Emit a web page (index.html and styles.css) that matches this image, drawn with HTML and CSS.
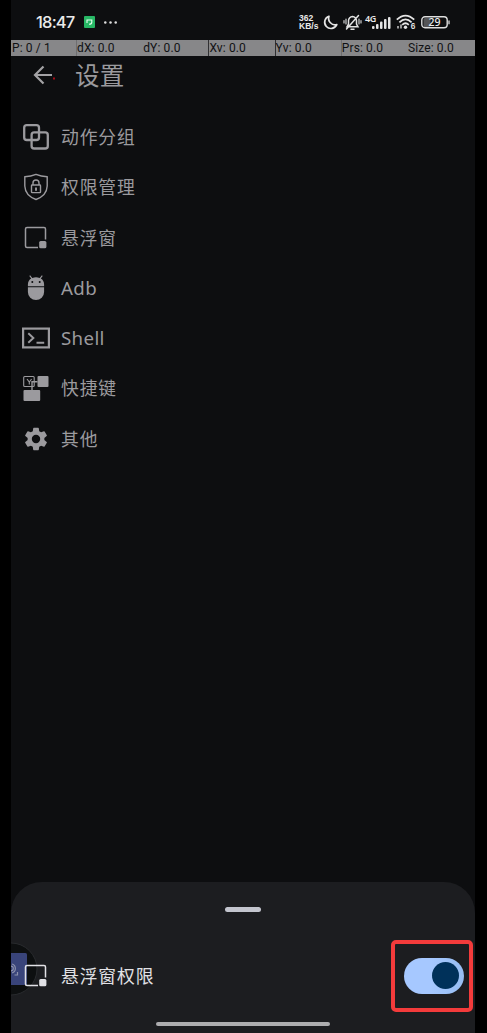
FILE: index.html
```html
<!DOCTYPE html>
<html lang="zh-CN">
<head>
<meta charset="utf-8">
<title>设置</title>
<link rel="stylesheet" href="styles.css">
</head>
<body>
<div class="phone">
  <header class="status">
    <span class="clock">18:47</span>
    <svg class="app-badge" width="11" height="12" viewBox="0 0 11 12"><rect width="11" height="12" rx="1" fill="#27b765"/><path d="M3 7V4h4.800v2.200q0 2-2.800 2" fill="none" stroke="#e8fff0" stroke-width="1.100"/></svg>
    <svg class="more" width="13" height="3" viewBox="0 0 13 3" fill="#dedede"><circle cx="1.300" cy="1.500" r="1.250"/><circle cx="6.500" cy="1.500" r="1.250"/><circle cx="11.700" cy="1.500" r="1.250"/></svg>
    <div class="signals">
      <div class="speed"><span>362</span><span>KB/s</span></div>
      <svg class="moon" width="15" height="15" viewBox="0 0 15 15"><path d="M6 1.200A6.300 6.300 0 1 0 13.800 9.600A6.500 6.500 0 0 1 6 1.200Z" fill="none" stroke="#e5e5e5" stroke-width="1.700" stroke-linejoin="round"/></svg>
      <svg class="bell" width="19" height="17" viewBox="0 0 19 17" fill="none" stroke="#e2e2e2" stroke-width="1.500" stroke-linecap="round"><path d="M4 12.800h11L13.500 10V6.500Q13 3 9.500 2.500Q6 3 5.500 6.500V10ZM8 15.200h3M15.500 1.500L3.500 15"/><path d="M3 5v5M16 5v5M1 6.500v2.500M18 6.500v2.500" stroke-width="1.100"/></svg>
      <span class="network">4G</span>
      <svg class="bars" width="19" height="13" viewBox="0 0 19 13" fill="#e5e5e5"><rect y="10" width="2.500" height="3" rx="1"/><rect x="4" y="8" width="2.500" height="5" rx="1"/><rect x="8" y="5.500" width="2.500" height="7.500" rx="1"/><rect x="12" y="3" width="2.500" height="10" rx="1"/><rect x="16" y="1" width="2.500" height="12" rx="1"/></svg>
      <svg class="wifi" width="20" height="16" viewBox="0 0 20 16"><g fill="none" stroke="#e5e5e5" stroke-width="1.800"><path d="M.8 5.700Q9.500-2.500 18.200 5.700M3.400 8.300Q9.500 2.500 15.600 8.300M6.200 10.800Q9.500 7.800 12.800 10.800"/><path d="M2 12v2.500M5 10.500v4" stroke-width="1.300"/></g><circle cx="9.500" cy="13.200" r="1.700" fill="#e5e5e5"/><text class="wifi-gen" x="14.800" y="15">6</text></svg>
      <svg class="battery" width="29" height="13" viewBox="0 0 29 13"><rect x="2.500" y="2" width="7" height="9" rx="1.500" fill="#555557"/><rect x=".8" y=".8" width="25.400" height="11" rx="3.200" fill="none" stroke="#dedede" stroke-width="1.400"/><path d="M28 4.500v3.800" stroke="#dedede" stroke-width="1.300"/><text class="battery-level" x="13.500" y="10" text-anchor="middle">29</text></svg>
    </div>
  </header>

  <div class="pointer-bar">
    <span>P: 0 / 1</span><span class="line">dX: 0.0</span><span>dY: 0.0</span><span class="line strong">Xv: 0.0</span><span class="line strong">Yv: 0.0</span><span class="line">Prs: 0.0</span><span>Size: 0.0</span>
  </div>

  <div class="title-bar">
    <svg class="back" width="22" height="20" viewBox="0 0 22 20"><path d="M19 10H2M10.500 1.500L2 10L10.500 18.500" fill="none" stroke="#a3a2a5" stroke-width="2.200"/><rect x="20" y="12.500" width="2" height="2" fill="#a50d16"/></svg>
    <h1>设置</h1>
  </div>

  <nav class="menu">
    <a class="item"><svg width="28" height="28" viewBox="0 0 28 28" fill="none" stroke="currentColor" stroke-width="2.300"><rect x="2.200" y="2.200" width="14.800" height="14.800" rx="2.600"/><rect x="9.600" y="9.300" width="16.200" height="16.200" rx="2.600"/></svg><span>动作分组</span></a>
    <a class="item"><svg width="28" height="28" viewBox="0 0 28 28" fill="none" stroke="currentColor" stroke-width="1.400"><path d="M14 1.400Q9 3.500 2.800 3.800V13Q3.200 22.500 14 26.500Q24.800 22.500 25.200 13V3.800Q19 3.500 14 1.400Z"/><rect x="9.500" y="12" width="9" height="7.600" rx=".7"/><path d="M11 12v-2a3 3 0 0 1 6 0v2"/><path d="M14 14.500v3.200" stroke-width="1.900"/></svg><span>权限管理</span></a>
    <a class="item"><svg width="28" height="28" viewBox="0 0 28 28"><path d="M16 23.500H5Q3.500 23.500 3.500 22V5Q3.500 3.500 5 3.500H22Q23.500 3.500 23.500 5V15.500" fill="none" stroke="currentColor" stroke-width="1.500"/><rect x="17.200" y="17" width="7.200" height="7.200" rx="1.500" fill="currentColor"/></svg><span>悬浮窗</span></a>
    <a class="item latin"><svg width="28" height="28" viewBox="0 0 28 28"><path fill="currentColor" fill-rule="evenodd" d="M5.900 12.200V10.500Q6 6.500 9.200 4.600L7.300 2l.8-.7 2.200 2.600Q14 2.500 17.700 3.900L19.900 1.300l.8.700-1.900 2.600Q22 6.500 22.100 10.500v1.700ZM10.300 7a1 1 0 1 0 0 2 1 1 0 0 0 0-2ZM17.700 7a1 1 0 1 0 0 2 1 1 0 0 0 0-2ZM5.900 13.300h16.200V18a8.100 8.100 0 0 1-16.200 0Z"/></svg><span>Adb</span></a>
    <a class="item latin"><svg width="28" height="28" viewBox="0 0 28 28" fill="none" stroke="currentColor"><rect x="1.100" y="4.600" width="25.800" height="18.800" stroke-width="2.200"/><path d="M6.300 9.200L11.400 14L6.300 18.800M14.500 18.800h7.700" stroke-width="1.900"/></svg><span>Shell</span></a>
    <a class="item"><svg width="28" height="28" viewBox="0 0 28 28"><g fill="currentColor"><rect x="15.500" y="2" width="11" height="11" rx="1"/><rect x="1.500" y="16" width="16.700" height="11" rx="1"/></g><g fill="none" stroke="currentColor" stroke-width="1.100"><rect x="1.700" y="2.500" width="10.500" height="10" rx="1"/><path d="M5 5l2.300 3 2.300-3M7.300 8v2.500"/><path d="M15.500 7.800h-5.500V17" stroke-width="1.400"/></g></svg><span>快捷键</span></a>
    <a class="item"><svg width="28" height="28" viewBox="0 0 24 24"><path fill="currentColor" d="M19.140 12.940c.04-.3.060-.61.060-.94s-.02-.64-.07-.94l2.030-1.580a.5.500 0 0 0 .12-.61l-1.920-3.320a.49.490 0 0 0-.59-.22l-2.390.96c-.5-.38-1.030-.7-1.620-.94l-.36-2.540a.48.480 0 0 0-.48-.41h-3.840a.47.470 0 0 0-.47.410l-.36 2.540c-.59.240-1.130.57-1.620.94l-2.390-.96a.48.480 0 0 0-.59.220L2.740 8.870a.48.480 0 0 0 .12.610l2.030 1.580c-.05.300-.09.630-.09.940s.02.640.07.940l-2.030 1.580a.5.500 0 0 0-.12.610l1.920 3.320c.12.220.37.290.59.220l2.390-.96c.5.380 1.030.7 1.620.94l.36 2.540c.05.240.24.410.48.410h3.840c.24 0 .44-.17.470-.41l.36-2.540c.59-.24 1.130-.56 1.620-.94l2.390.96c.22.080.47 0 .59-.22l1.920-3.320a.47.470 0 0 0-.12-.61ZM12 15.600A3.600 3.600 0 1 1 12 8.400a3.600 3.600 0 0 1 0 7.200Z"/></svg><span>其他</span></a>
  </nav>

  <section class="sheet">
    <div class="handle"></div>
    <div class="permission">
      <svg class="window-icon" width="28" height="28" viewBox="0 0 28 28"><path d="M16 23.500H5Q3.500 23.500 3.500 22V5Q3.500 3.500 5 3.500H22Q23.500 3.500 23.500 5V15.500" fill="none" stroke="currentColor" stroke-width="1.500"/><rect x="17.200" y="17" width="7.200" height="7.200" rx="1.500" fill="currentColor"/></svg>
      <span class="permission-name">悬浮窗权限</span>
      <div class="highlight"><div class="toggle"><div class="knob"></div></div></div>
    </div>
    <div class="home-bar"></div>
    <svg class="floating" width="27" height="54" viewBox="0 0 27 54"><circle cx="0" cy="27" r="26" fill="#0d0f10" stroke="#292b2e"/><path d="M0 11h14.500q1.500 0 1.500 1.500V43H0Z" fill="#39447a"/><g fill="none" stroke="#8c91ac" stroke-width="1.200"><circle cx="0" cy="26.500" r="2.300"/><path d="M1 22a4.700 4.700 0 0 1 0 9M3.500 33h3v-3"/></g></svg>
  </section>
</div>
</body>
</html>
```
FILE: styles.css
```css
* { box-sizing: border-box; }
body { margin: 0; background: #000; }
.phone {
  width: 464px;
  height: 1033px;
  margin-left: 11px;
  display: flex;
  flex-direction: column;
  overflow: hidden;
  background: #0d0e10;
  color: #9b9a9e;
  font-family: "Noto Sans", "Noto Sans CJK SC", sans-serif;
}
.status {
  height: 40px;
  flex: none;
  display: flex;
  align-items: center;
  padding: 4px 25px 0 25px;
  color: #eaeaea;
}
.clock { width: 39px; font: 500 16.5px/20px Inter, sans-serif; letter-spacing: -0.8px; white-space: nowrap; }
.app-badge { margin-left: 9px; }
.more { margin-left: 9px; }
.signals { margin-left: auto; display: flex; align-items: center; }
.speed { display: flex; flex-direction: column; width: 20px; font: 700 8.5px/8px "Liberation Sans", sans-serif; letter-spacing: 0; }
.moon { margin-left: 4px; }
.bell { margin-left: 5px; }
.network { margin: -7px 0 0 3px; width: 10px; font: 600 9px/9px "Noto Sans", sans-serif; letter-spacing: -0.4px; }
.bars { margin-left: -3px; }
.wifi { margin-left: 5px; }
.wifi-gen { font: 700 7px Inter, sans-serif; fill: #e5e5e5; }
.battery { margin-left: 5px; }
.battery-level { font: 500 10.5px "Noto Sans", sans-serif; fill: #eee; }
.pointer-bar {
  height: 16px;
  flex: none;
  display: grid;
  grid-template-columns: 65px repeat(6, 66.2px);
  background: #878789;
  color: #101113;
  font: 12px/17px Roboto, sans-serif;
  letter-spacing: 0.12px;
  overflow: hidden;
}
.pointer-bar span { padding-left: 1px; white-space: nowrap; }
.pointer-bar .line { padding-left: 0; border-left: 1px solid #6e6e70; }
.pointer-bar .strong { border-color: #303033; }
.title-bar { height: 56px; flex: none; display: flex; align-items: flex-start; padding-left: 22px; }
.back { margin-top: 9px; }
h1 { margin: 2px 0 0 20px; font-size: 24.5px; line-height: 35px; font-weight: 400; letter-spacing: 0.3px; }
.menu { display: flex; flex-direction: column; flex: none; }
.item { height: 50.25px; display: flex; align-items: center; gap: 11px; padding-left: 11px; font-size: 17.8px; line-height: 26px; letter-spacing: 0.9px; }
.item svg { flex: none; }
.latin { font-size: 18.7px; letter-spacing: 0.35px; }
.sheet {
  position: relative;
  margin-top: auto;
  height: 151px;
  flex: none;
  display: flex;
  flex-direction: column;
  align-items: center;
  border-radius: 31px 31px 0 0;
  background: #1c1d20;
}
.handle { width: 36px; height: 5px; margin-top: 25px; border-radius: 3px; background: #c3c5ce; flex: none; }
.permission { width: 100%; display: flex; align-items: center; margin-top: 28px; padding: 0 2px 0 11px; color: #e1e1e5; }
.window-icon { position: relative; z-index: 2; }
.permission-name { margin-left: 11px; font-size: 17.8px; line-height: 26px; letter-spacing: 0.9px; }
.highlight { width: 82px; height: 72px; margin-left: auto; border: 4px solid #f33b3b; border-radius: 5px; padding: 14px 0 0 9px; }
.toggle { width: 60px; height: 36px; border-radius: 18px; background: linear-gradient(90deg, #a6c8ff 45%, #96bdf2); padding: 4px 5px 5px 28px; }
.knob { width: 27px; height: 27px; border-radius: 50%; background: #00315a; }
.home-bar { width: 174px; height: 4px; margin-top: 10px; border-radius: 2px; background: #adadaf; flex: none; }
.floating { position: absolute; z-index: 1; left: 0; top: 60px; }
```
